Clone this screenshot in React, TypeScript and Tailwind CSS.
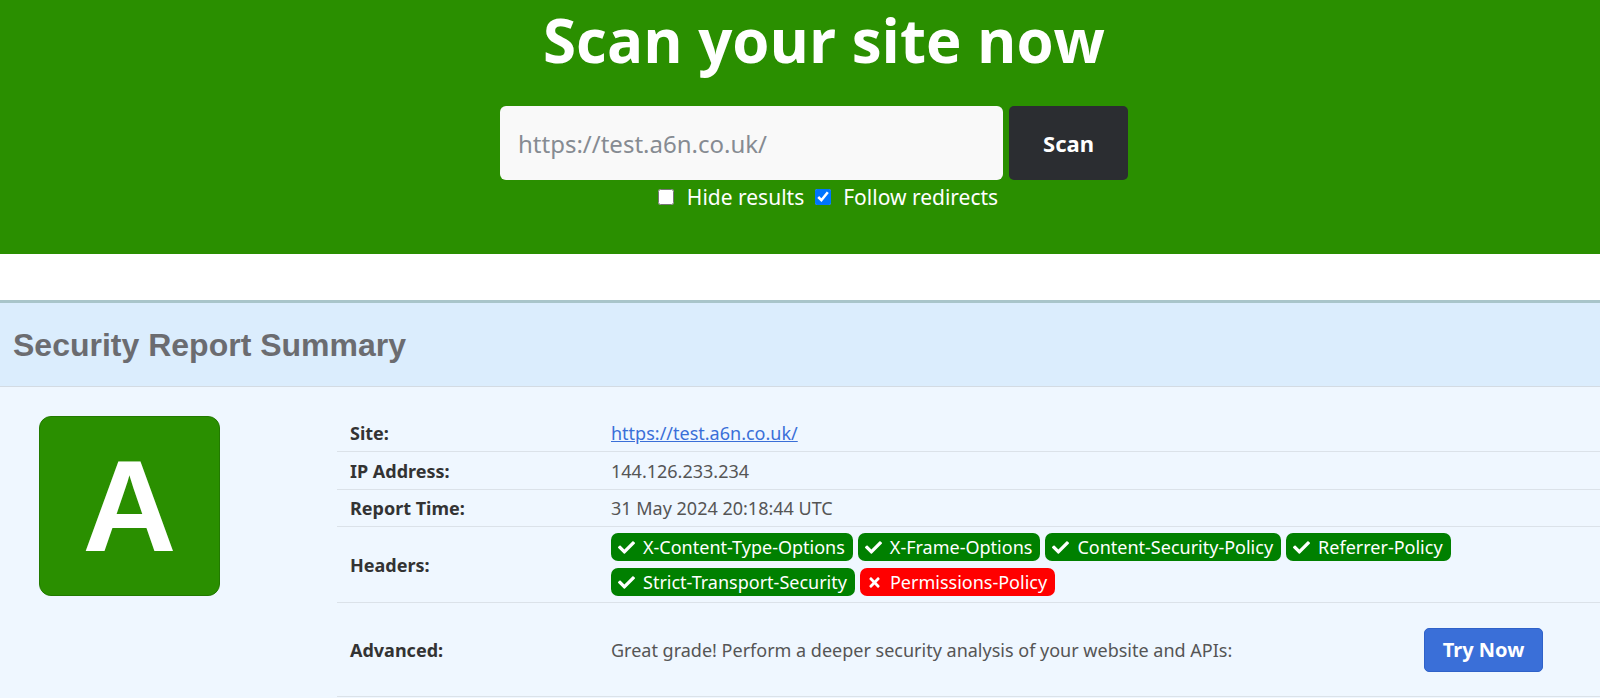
import { FaCheck, FaTimes } from "react-icons/fa";

const headers: { name: string; ok: boolean }[] = [
  { name: "X-Content-Type-Options", ok: true },
  { name: "X-Frame-Options", ok: true },
  { name: "Content-Security-Policy", ok: true },
  { name: "Referrer-Policy", ok: true },
  { name: "Strict-Transport-Security", ok: true },
  { name: "Permissions-Policy", ok: false },
];

function Badge({ name, ok }: { name: string; ok: boolean }) {
  return (
    <span
      className={`inline-flex h-[28px] items-center gap-[8px] rounded-[7px] pr-[8px] pl-[7px] text-[18px] leading-none text-white ${
        ok ? "bg-[#008000]" : "bg-[#ff0000]"
      }`}
    >
      {ok ? <FaCheck className="size-[17px]" /> : <FaTimes className="size-[15px]" />}
      {name}
    </span>
  );
}

function Row({ label, children, className = "" }: { label: string; children: React.ReactNode; className?: string }) {
  return (
    <div className={`grid grid-cols-[274px_1fr] border-b border-[#dbe2e9] ${className}`}>
      <div className="flex items-center pl-[13px] font-bold text-[#333]">{label}</div>
      <div className="flex items-center text-[#555]">{children}</div>
    </div>
  );
}

export default function App() {
  return (
    <div className="h-[698px] w-[1600px] overflow-hidden bg-white font-['Noto_Sans',sans-serif] text-[18px] leading-[24px]">
      <header className="flex h-[254px] flex-col items-center bg-[#2a8f00]">
        <h1 className="ml-[48px] font-['Open_Sans',sans-serif] text-[60px] leading-[80px] font-bold text-white">
          Scan your site now
        </h1>
        <div className="mt-[26px] ml-[28px] flex gap-[6px]">
          <input
            className="h-[74px] w-[503px] rounded-[6px] bg-[#f9f9f9] px-[18px] text-[24px] outline-none placeholder:text-[#868b92]"
            placeholder="https://test.a6n.co.uk/"
          />
          <button className="h-[74px] w-[119px] rounded-[5px] bg-[#2b2d31] text-[22px] font-bold text-white">Scan</button>
        </div>
        <div className="mt-[3px] ml-[56px] flex items-center text-[21px] leading-[28px] text-white">
          <input type="checkbox" className="size-[16px] accent-[#0075ff]" />
          <span className="ml-[13px]">Hide results</span>
          <input type="checkbox" defaultChecked className="ml-[11px] size-[16px] accent-[#0075ff]" />
          <span className="ml-[12px]">Follow redirects</span>
        </div>
      </header>

      <section className="mt-[46px] border-t-[3px] border-[#a9c5ca]">
        <div className="flex h-[84px] items-center border-b border-[#d3dbe3] bg-[#dbedfd] pl-[13px]">
          <h2 className="font-['Liberation_Sans',sans-serif] text-[32px] font-bold text-[#6b6c70]">Security Report Summary</h2>
        </div>
        <div className="flex h-[400px] bg-[#eff7ff]">
          <div className="w-[337px] shrink-0 pt-[29px] pl-[39px]">
            <div className="flex h-[180px] w-[181px] items-center justify-center rounded-[12px] border border-[#227a00] bg-[#2a8f00]">
              <span className="font-['Liberation_Sans',sans-serif] text-[130px] leading-none font-bold text-white">A</span>
            </div>
          </div>
          <div className="mt-[27px] flex-1">
            <Row label="Site:" className="h-[38px]">
              <a href="#" className="text-[#3a6fd8] underline">
                https://test.a6n.co.uk/
              </a>
            </Row>
            <Row label="IP Address:" className="h-[38px]">
              144.126.233.234
            </Row>
            <Row label="Report Time:" className="h-[37px]">
              31 May 2024 20:18:44 UTC
            </Row>
            <Row label="Headers:" className="h-[76px]">
              <div className="flex flex-wrap gap-x-[5px] gap-y-[7px]">
                {headers.map((h) => (
                  <Badge key={h.name} {...h} />
                ))}
              </div>
            </Row>
            <Row label="Advanced:" className="h-[94px]">
              <div className="flex w-full items-center justify-between pr-[57px]">
                <span>Great grade! Perform a deeper security analysis of your website and APIs:</span>
                <button className="h-[44px] w-[119px] rounded-[5px] border border-[#2f62c9] bg-[#3a6fd8] text-[20px] font-bold text-white">
                  Try Now
                </button>
              </div>
            </Row>
          </div>
        </div>
      </section>
    </div>
  );
}
